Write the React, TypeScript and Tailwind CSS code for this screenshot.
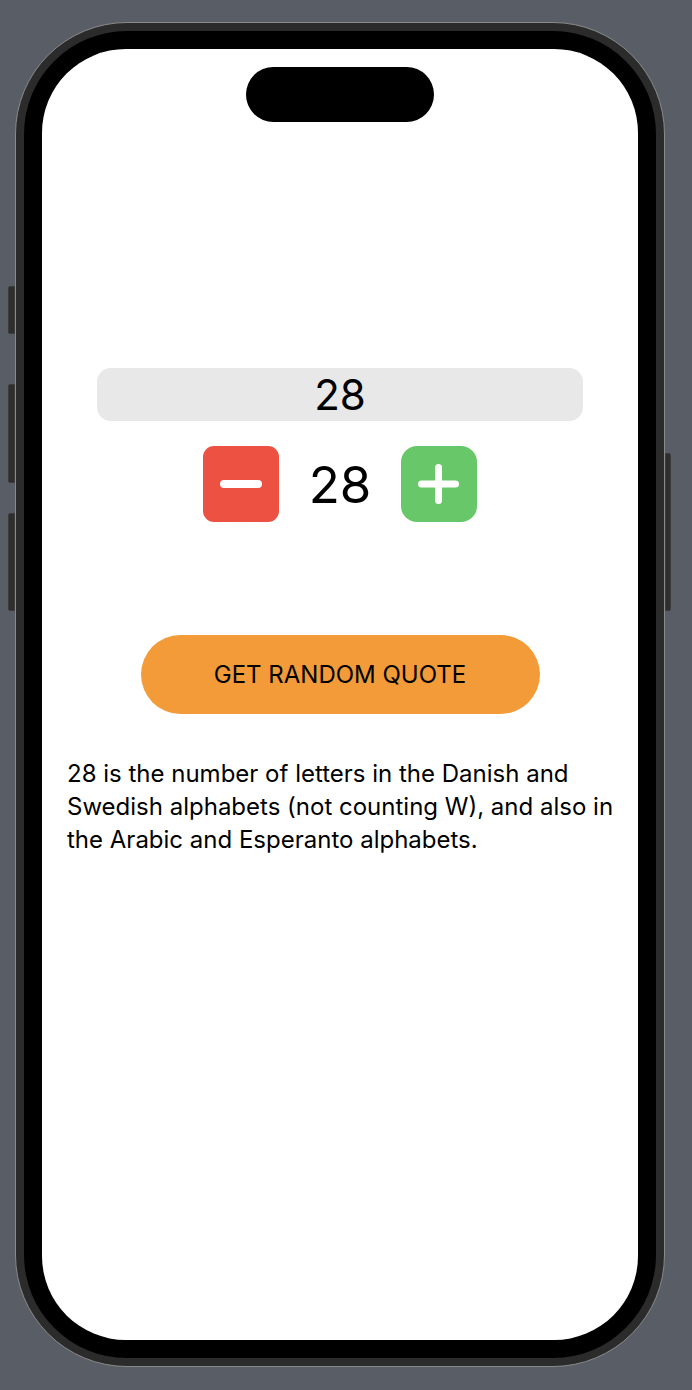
import { FC } from 'react';

const font = { fontFamily: 'Inter, "Liberation Sans", sans-serif' };

// Side hardware buttons of the phone frame
const SideButtons: FC = () => (
  <>
    <div className="absolute left-[-8px] top-[263px] w-[7px] h-[48px] rounded-l-[2px] bg-[#2e2e2e] border border-[#3c3c3c]" />
    <div className="absolute left-[-8px] top-[361px] w-[7px] h-[99px] rounded-l-[2px] bg-[#2e2e2e] border border-[#3c3c3c]" />
    <div className="absolute left-[-8px] top-[490px] w-[7px] h-[98px] rounded-l-[2px] bg-[#2e2e2e] border border-[#3c3c3c]" />
    <div className="absolute right-[-7px] top-[430px] w-[6px] h-[158px] rounded-r-[2px] bg-[#2e2e2e] border border-[#3c3c3c]" />
  </>
);

const StepButton: FC<{ kind: 'minus' | 'plus' }> = ({ kind }) => {
  if (kind === 'minus') {
    return (
      <button className="w-[76px] h-[76px] rounded-[11px] bg-[#ec5141] flex items-center justify-center">
        <svg width="76" height="76" viewBox="0 0 76 76">
          <line x1="21" y1="38" x2="55" y2="38" stroke="white" strokeWidth="8" strokeLinecap="round" />
        </svg>
      </button>
    );
  }
  return (
    <button className="w-[76px] h-[76px] rounded-[16px] bg-[#68c768] flex items-center justify-center">
      <svg width="76" height="76" viewBox="0 0 76 76">
        <line x1="20.5" y1="38" x2="54.5" y2="38" stroke="white" strokeWidth="7" strokeLinecap="round" />
        <line x1="37.5" y1="21.5" x2="37.5" y2="54.5" stroke="white" strokeWidth="7" strokeLinecap="round" />
      </svg>
    </button>
  );
};

const App: FC = () => {
  return (
    <div className="w-[692px] h-[1390px] bg-[#595d65] pt-[22px] pl-[15px] overflow-hidden" style={font}>
      {/* Phone frame */}
      <div className="relative w-[650px] h-[1345px] rounded-[112px] bg-[#2b2b2b] border border-[#8a8a8a] p-[8px]">
        <SideButtons />
        <div className="w-full h-full rounded-[103px] bg-black px-[18px] py-[18px]">
          {/* Screen */}
          <div className="w-full h-full rounded-[84px] bg-white flex flex-col items-center overflow-hidden">
            {/* Dynamic island */}
            <div className="mt-[18px] w-[188px] h-[55px] rounded-full bg-black" />

            {/* Number field */}
            <div className="mt-[246px] w-[486px] h-[53px] rounded-[14px] bg-[#e8e8e8] flex items-center justify-center text-[42px] text-black leading-none">
              28
            </div>

            {/* Stepper */}
            <div className="mt-[25px] flex items-center gap-[30px]">
              <StepButton kind="minus" />
              <span className="text-[51px] leading-none text-black">28</span>
              <StepButton kind="plus" />
            </div>

            {/* Quote button */}
            <button className="mt-[113px] w-[399px] h-[79px] rounded-full bg-[#f29b38] text-black text-[24px]">
              GET RANDOM QUOTE
            </button>

            {/* Fact text */}
            <p className="mt-[43px] self-start ml-[25px] text-[24px] leading-[33px] text-black">
              28 is the number of letters in the Danish and
              <br />
              Swedish alphabets (not counting W), and also in
              <br />
              the Arabic and Esperanto alphabets.
            </p>
          </div>
        </div>
      </div>
    </div>
  );
};

export default App;
